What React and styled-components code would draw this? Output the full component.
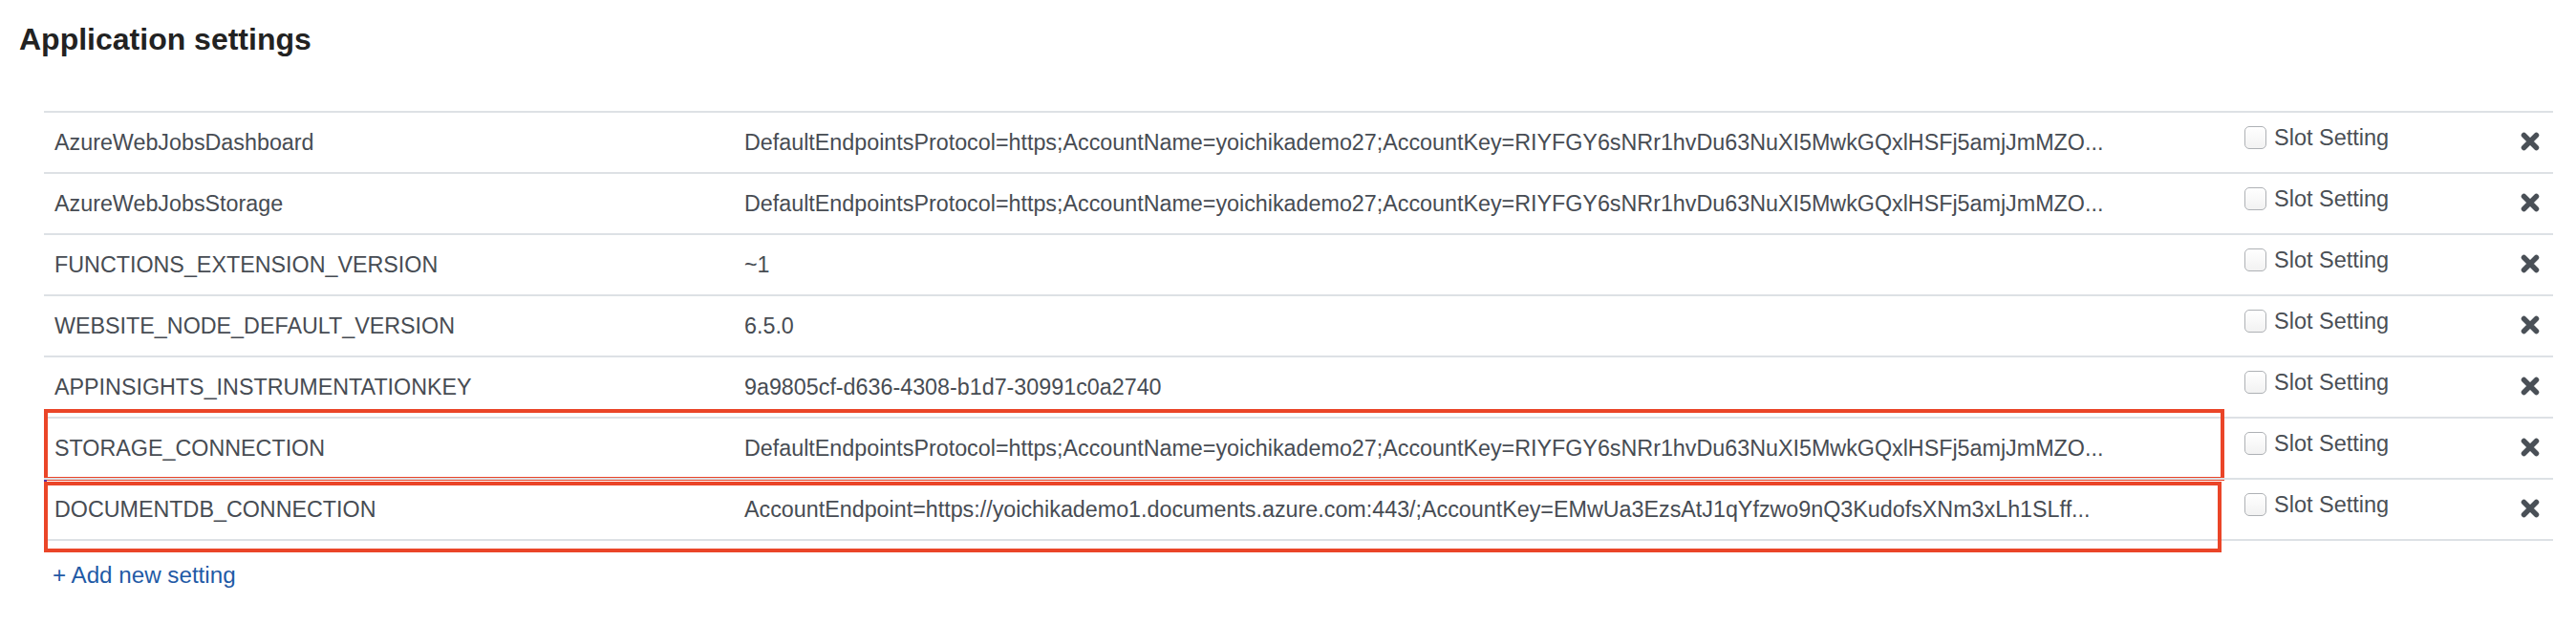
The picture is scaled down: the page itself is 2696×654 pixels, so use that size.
import React from "react";
import styled, { createGlobalStyle } from "styled-components";

const GlobalStyle = createGlobalStyle`
  html, body {
    margin: 0;
    padding: 0;
    background: #ffffff;
  }
  body {
    font-family: "Liberation Sans", Arial, sans-serif;
    color: #474c53;
  }
`;

const Page = styled.div`
  padding: 23px 24px 0 20px;
`;

const Title = styled.h2`
  margin: 0;
  font-size: 32px;
  line-height: 36px;
  font-weight: 700;
  color: #222222;
`;

const Table = styled.div`
  margin: 57px 0 0 26px;
  width: 2626px;
  border-bottom: 2px solid #dde1e5;
`;

const Row = styled.div`
  position: relative;
  display: grid;
  grid-template-columns: 722px 1570px 282px 52px;
  height: 62px;
  border-top: 2px solid #dde1e5;
  box-shadow: ${(p) => (p.$selected ? "inset 3px 0 0 #5a34a6" : "none")};
`;

const Cell = styled.div`
  display: flex;
  align-items: center;
  padding-left: 11px;
  font-size: 23.3px;
  white-space: nowrap;
  overflow: hidden;
  color: #474c53;
`;

const SlotCell = styled.label`
  display: flex;
  align-items: center;
  align-self: start;
  gap: 8px;
  padding: 14px 0 0 11px;
  font-size: 23.5px;
  line-height: 24px;
  color: #4a4f55;
`;

const Check = styled.span`
  display: inline-block;
  width: 21px;
  height: 22px;
  border: 1.5px solid #aeb1b5;
  border-radius: 5px;
  background: linear-gradient(#ffffff, #f2f2f2);
`;

const DeleteCell = styled.div`
  display: flex;
  align-items: center;
  padding-left: 17px;
  padding-bottom: 2px;
`;

const Highlight = styled.div`
  position: absolute;
  left: 0;
  top: ${(p) => p.$top}px;
  width: ${(p) => p.$width}px;
  height: ${(p) => p.$height}px;
  box-sizing: border-box;
  border: 4px solid #ea4528;
  pointer-events: none;
`;

const AddLink = styled.a`
  display: inline-block;
  margin: 23px 0 0 35px;
  font-size: 24.2px;
  line-height: 26px;
  color: #1f5aa6;
  text-decoration: none;
`;

const CloseIcon = () => (
  <svg width="22" height="22" viewBox="0 0 22 22">
    <path
      d="M4.5 4.5 L17.5 17.5 M17.5 4.5 L4.5 17.5"
      stroke="#4a5057"
      strokeWidth="5.5"
      strokeLinecap="round"
    />
  </svg>
);

const storageValue =
  "DefaultEndpointsProtocol=https;AccountName=yoichikademo27;AccountKey=RIYFGY6sNRr1hvDu63NuXI5MwkGQxlHSFj5amjJmMZO...";

const settings = [
  { name: "AzureWebJobsDashboard", value: storageValue },
  { name: "AzureWebJobsStorage", value: storageValue },
  { name: "FUNCTIONS_EXTENSION_VERSION", value: "~1" },
  { name: "WEBSITE_NODE_DEFAULT_VERSION", value: "6.5.0" },
  { name: "APPINSIGHTS_INSTRUMENTATIONKEY", value: "9a9805cf-d636-4308-b1d7-30991c0a2740" },
  {
    name: "STORAGE_CONNECTION",
    value: storageValue,
    selected: true,
    box: { top: -10, width: 2282, height: 75 },
  },
  {
    name: "DOCUMENTDB_CONNECTION",
    value:
      "AccountEndpoint=https://yoichikademo1.documents.azure.com:443/;AccountKey=EMwUa3EzsAtJ1qYfzwo9nQ3KudofsXNm3xLh1SLff...",
    selected: true,
    box: { top: 2, width: 2279, height: 74 },
  },
];

export default function App() {
  return (
    <>
      <GlobalStyle />
      <Page>
        <Title>Application settings</Title>
        <Table>
          {settings.map((s) => (
            <Row key={s.name} $selected={s.selected}>
              <Cell>{s.name}</Cell>
              <Cell>{s.value}</Cell>
              <SlotCell>
                <Check />
                Slot Setting
              </SlotCell>
              <DeleteCell>
                <CloseIcon />
              </DeleteCell>
              {s.box && (
                <Highlight $top={s.box.top} $width={s.box.width} $height={s.box.height} />
              )}
            </Row>
          ))}
        </Table>
        <AddLink href="#">+ Add new setting</AddLink>
      </Page>
    </>
  );
}
